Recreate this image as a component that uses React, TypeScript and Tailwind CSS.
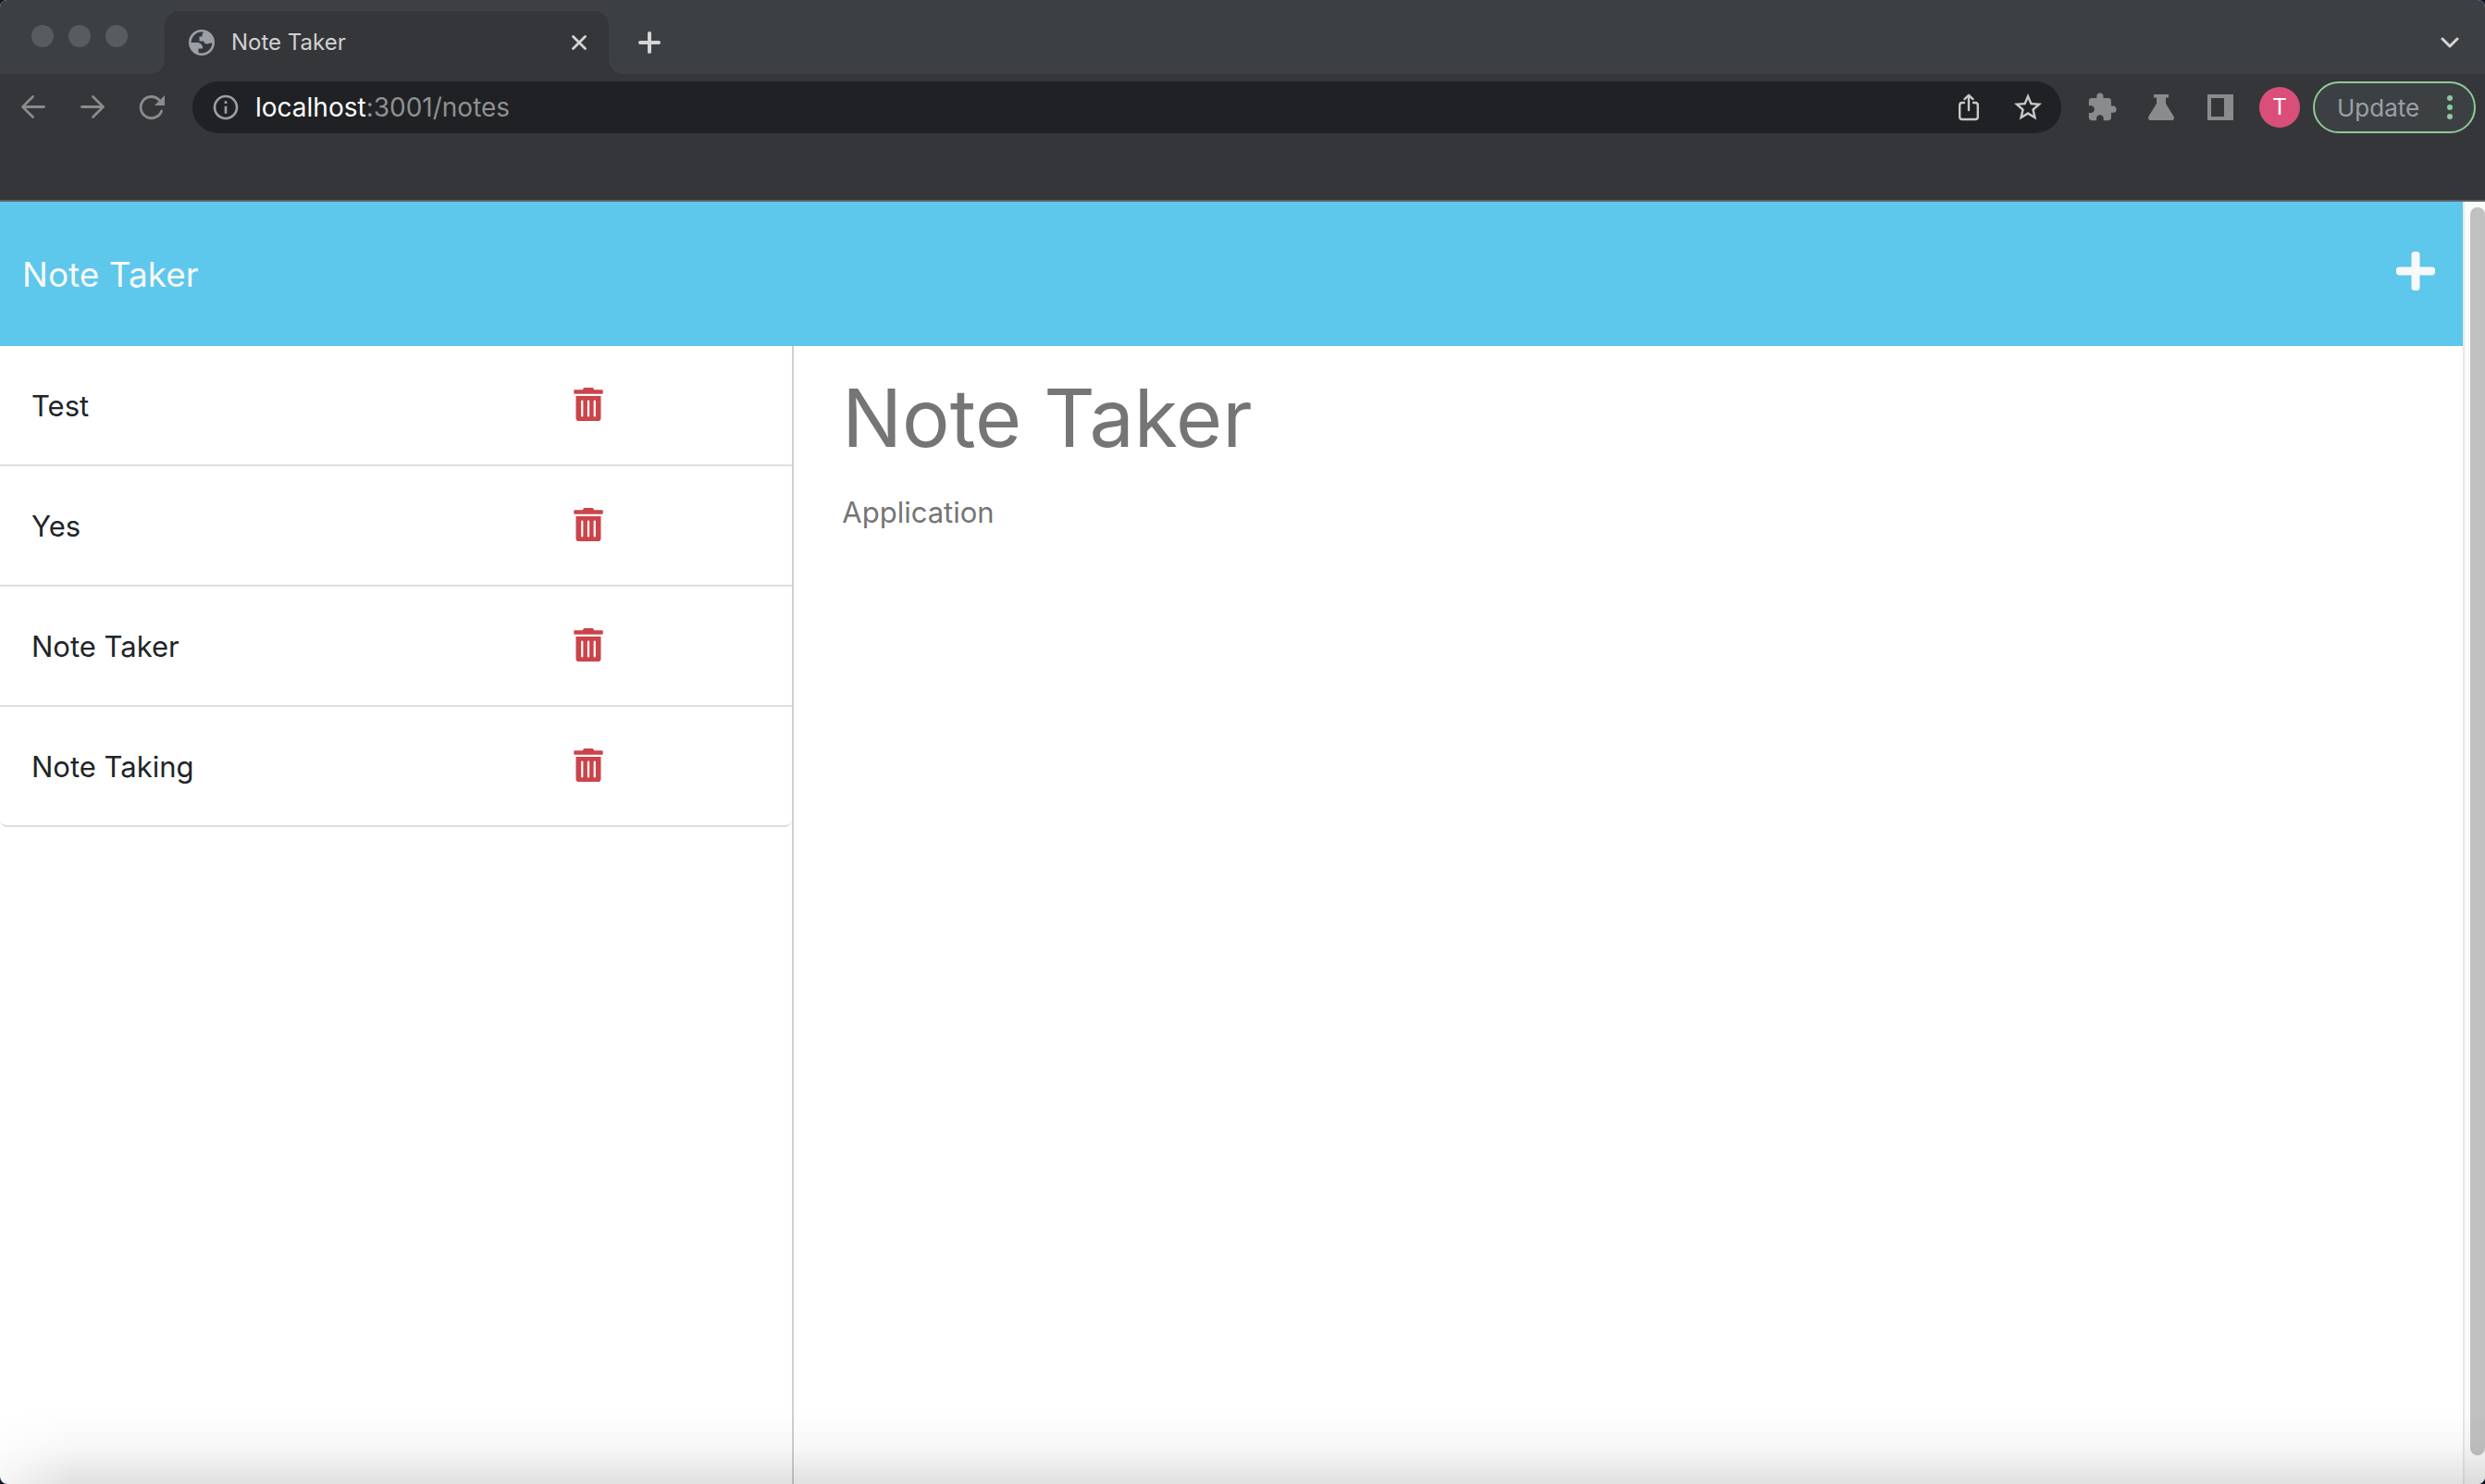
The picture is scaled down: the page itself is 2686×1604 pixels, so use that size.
import { useState } from "react";
import type { ReactNode } from "react";
import { FaPlus, FaTrashAlt } from "react-icons/fa";
import { MdExtension, MdInfoOutline, MdStarBorder } from "react-icons/md";

function GlobeIcon() {
  return (
    <svg width="28" height="28" viewBox="0 0 28 28" fill="#9aa0a6" aria-hidden="true">
      <circle cx="14" cy="14" r="12.7" fill="none" stroke="#9aa0a6" strokeWidth="2.6" />
      <path d="M1.5 14H8.5C12 14 15 16 15 19V20.5H10.5V25.5C5 24 1.5 20 1.5 14Z" />
      <path d="M17 2.5C14.5 3.5 14.5 5 14.5 7.5H11.5V12.5H16.5C16 14.5 17.5 15.5 20 15.5C21.5 15.5 22 14.5 24 14.5H26.5C26.5 9 23 4 17 2.5Z" />
    </svg>
  );
}

function ArrowIcon({ forward = false }: { forward?: boolean }) {
  return (
    <svg width="28" height="28" viewBox="0 0 28 28" fill="none" stroke="#8a8b8d" strokeWidth="2.8" strokeLinecap="round" strokeLinejoin="round" aria-hidden="true">
      {forward ? <path d="M2.5 13.5H25M14.5 2.5L25.5 13.5L14.5 24.5" /> : <path d="M25.5 13.5H3M13.5 2.5L2.5 13.5L13.5 24.5" />}
    </svg>
  );
}

function ReloadIcon() {
  return (
    <svg width="28" height="28" viewBox="0 0 28 28" fill="none" aria-hidden="true">
      <path d="M24.6 18A11.6 11.6 0 1 1 22 6" stroke="#8a8b8d" strokeWidth="2.8" strokeLinecap="round" />
      <path d="M28 1V12H17Z" fill="#8a8b8d" />
    </svg>
  );
}

function ShareIcon() {
  return (
    <svg width="24" height="30" viewBox="0 0 24 30" fill="none" stroke="#c7c8c9" strokeWidth="2.4" strokeLinecap="round" strokeLinejoin="round" aria-hidden="true">
      <path d="M7 10H5Q2.2 10 2.2 12.8V25.2Q2.2 28 5 28H19Q21.8 28 21.8 25.2V12.8Q21.8 10 19 10H17" />
      <path d="M12 18V2M7.5 6.2L12 1.8L16.5 6.2" />
    </svg>
  );
}

function FlaskIcon() {
  return (
    <svg width="28" height="28" viewBox="0 0 28 28" fill="#8a8b8d" aria-hidden="true">
      <path d="M6 0H22V3.5H19V10L27.4 23.4C28.8 25.8 27.6 28 25 28H3C.4 28-.8 25.8.6 23.4L9 10V3.5H6Z" />
    </svg>
  );
}

function SidePanelIcon() {
  return (
    <svg width="28" height="28" viewBox="0 0 28 28" fill="#8a8b8d" aria-hidden="true">
      <path fillRule="evenodd" d="M0 0H28V28H0ZM4 4V24H18V4Z" />
    </svg>
  );
}

function ToolButton({ label, children }: { label: string; children: ReactNode }) {
  return (
    <button type="button" aria-label={label} className="flex h-14 w-16 shrink-0 items-center justify-center">
      {children}
    </button>
  );
}

function TabStrip() {
  return (
    <div className="flex h-20 items-start bg-[#3c4043]">
      <div className="flex w-[178px] shrink-0 gap-4 pl-[34px] pt-[27px]">
        <span className="size-6 rounded-full bg-[#595c5f]" />
        <span className="size-6 rounded-full bg-[#595c5f]" />
        <span className="size-6 rounded-full bg-[#595c5f]" />
      </div>
      <div className="relative mt-3 flex h-17 w-[480px] items-center rounded-t-2xl bg-[#35363a] pl-[26px] pr-4">
        <span className="absolute bottom-0 right-full size-4 bg-[radial-gradient(circle_at_0_0,transparent_16px,#35363a_16px)]" />
        <span className="absolute bottom-0 left-full size-4 bg-[radial-gradient(circle_at_100%_0,transparent_16px,#35363a_16px)]" />
        <GlobeIcon />
        <span className="ml-[18px] flex-1 text-2xl text-[#d0d1d2]">Note Taker</span>
        <button type="button" aria-label="Close tab" className="flex size-8 items-center justify-center">
          <svg width="16" height="16" viewBox="0 0 16 16" stroke="#d4d5d6" strokeWidth="2.8" strokeLinecap="round" aria-hidden="true">
            <path d="M1.5 1.5L14.5 14.5M14.5 1.5L1.5 14.5" />
          </svg>
        </button>
      </div>
      <button type="button" aria-label="New tab" className="ml-5 mt-[22px] flex size-12 items-center justify-center">
        <svg width="24" height="24" viewBox="0 0 24 24" stroke="#d4d5d6" strokeWidth="4" strokeLinecap="round" aria-hidden="true">
          <path d="M12 2V22M2 12H22" />
        </svg>
      </button>
      <button type="button" aria-label="Search tabs" className="ml-auto mr-3.5 mt-[22px] flex size-12 items-center justify-center">
        <svg width="20" height="14" viewBox="0 0 20 14" fill="none" stroke="#d4d5d6" strokeWidth="3" strokeLinecap="round" strokeLinejoin="round" aria-hidden="true">
          <path d="M2 3L10 11L18 3" />
        </svg>
      </button>
    </div>
  );
}

function Toolbar() {
  return (
    <div className="border-b-2 border-[#5f6064] bg-[#35363a] pb-16">
      <div className="flex h-18 items-center pl-1 pr-2.5">
        <ToolButton label="Back"><ArrowIcon /></ToolButton>
        <ToolButton label="Forward"><ArrowIcon forward /></ToolButton>
        <ToolButton label="Reload"><ReloadIcon /></ToolButton>
        <div className="mx-3 flex h-14 flex-1 items-center rounded-full bg-[#202124] pl-5 pr-1">
          <MdInfoOutline size={32} color="#9aa0a6" aria-hidden="true" />
          <a href="#notes" className="ml-4 flex-1 text-[28px] text-[#8f9092]">
            <span className="text-white">localhost</span>:3001/notes
          </a>
          <ToolButton label="Share"><ShareIcon /></ToolButton>
          <ToolButton label="Bookmark"><MdStarBorder size={36} color="#c7c8c9" /></ToolButton>
        </div>
        <ToolButton label="Extensions"><MdExtension size={34} color="#8a8b8d" /></ToolButton>
        <ToolButton label="Experiments"><FlaskIcon /></ToolButton>
        <ToolButton label="Side panel"><SidePanelIcon /></ToolButton>
        <ToolButton label="Profile">
          <span className="flex size-11 items-center justify-center rounded-full bg-[#da4f7a] text-2xl text-white">T</span>
        </ToolButton>
        <button type="button" className="ml-1 flex h-14 w-44 items-center justify-between rounded-full border-2 border-[#8dca9b] bg-[#3c4043] pl-6 pr-[23px] text-[26px] text-[#9aa0a6]">
          Update
          <span className="flex flex-col gap-1">
            <span className="size-1.5 rounded-full bg-[#8dca9b]" />
            <span className="size-1.5 rounded-full bg-[#8dca9b]" />
            <span className="size-1.5 rounded-full bg-[#8dca9b]" />
          </span>
        </button>
      </div>
    </div>
  );
}

const initialNotes = ["Test", "Yes", "Note Taker", "Note Taking"];

export default function App() {
  const [notes, setNotes] = useState(initialNotes);
  return (
    <div className="bg-[#101828]">
      <div className="relative flex h-screen flex-col overflow-hidden rounded-lg bg-white font-['Inter',sans-serif]">
        <TabStrip />
        <Toolbar />
        <div className="flex min-h-0 flex-1">
          <div className="flex min-w-0 flex-1 flex-col">
            <header className="flex h-39 shrink-0 items-center justify-between bg-[#5dc7ec] pl-6 pr-[30px] text-[#f8f9fa]">
              <a href="#home" className="pt-0.5 text-[37px]">Note Taker</a>
              <button type="button" aria-label="New note" className="pb-1.5">
                <FaPlus size={48} className="w-[42px]" />
              </button>
            </header>
            <main className="flex min-h-0 flex-1">
              <aside className="w-[calc(100%/3-29px)] shrink-0 border-r-2 border-[#cfcfcf]">
                <ul>
                  {notes.map((note) => (
                    <li key={note} className="flex h-[130px] items-center justify-between border-b-2 border-[#dfdfdf] pl-[34px] pr-[204px] last:rounded-b-lg">
                      <span className="pt-0.5 text-[31px] text-[#212529]">{note}</span>
                      <button type="button" aria-label={"Delete " + note} className="pb-0.5" onClick={() => setNotes(notes.filter((n) => n !== note))}>
                        <FaTrashAlt size={36} className="w-8" color="#cb444a" />
                      </button>
                    </li>
                  ))}
                </ul>
              </aside>
              <section className="flex min-w-0 flex-1 flex-col px-7 pt-3">
                <input aria-label="Note title" placeholder="Note Taker" className="h-33 w-full px-6 text-[86px] placeholder-[#757575] outline-none" />
                <textarea aria-label="Note text" placeholder="Application" className="w-full flex-1 resize-none px-6 pt-3 text-[31px] leading-12 placeholder-[#757575] outline-none" />
              </section>
            </main>
          </div>
          <div className="flex w-6 shrink-0 flex-col border-l-2 border-[#e8e8e8] bg-[#fafafa] pb-[31px] pl-1.5 pt-1.5">
            <div className="flex-1 rounded-full bg-[#c1c1c1]" />
          </div>
        </div>
        <div className="pointer-events-none absolute inset-x-0 bottom-0 h-20 bg-linear-to-b from-transparent via-black/3 to-black/12 mask-[linear-gradient(to_right,rgba(0,0,0,0.3),black_80px)]" />
      </div>
    </div>
  );
}
